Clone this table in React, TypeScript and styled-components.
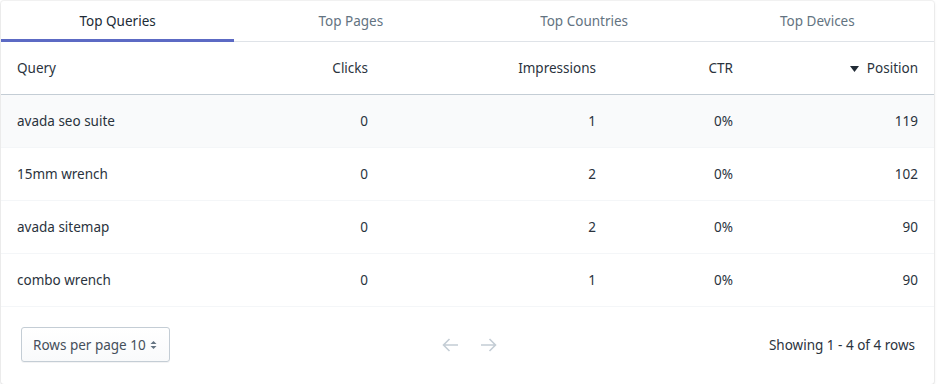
import React from "react";
import styled, { createGlobalStyle } from "styled-components";

const Global = createGlobalStyle`
  html, body { margin: 0; padding: 0; background: #ffffff; }
  body { font-family: "Noto Sans", "Open Sans", sans-serif; font-size: 13.5px; color: #212b36; }
  * { box-sizing: border-box; }
`;

const Page = styled.div`
  padding: 1px 0 0 1px;
  width: 938px;
`;

const Card = styled.div`
  width: 933px;
  background: #fff;
  border-radius: 3px;
  box-shadow: 0 0 0 1px rgba(63, 63, 68, 0.05), 0 1px 3px 0 rgba(63, 63, 68, 0.15);
  overflow: hidden;
`;

const Tabs = styled.div`
  display: grid;
  grid-template-columns: repeat(4, 1fr);
  border-bottom: 1px solid #dfe3e8;
  height: 41px;
`;

const Tab = styled.div<{ $active?: boolean }>`
  display: flex;
  align-items: center;
  justify-content: center;
  color: ${(p) => (p.$active ? "#212b36" : "#637381")};
  position: relative;
  padding-bottom: 1px;
  &::after {
    content: "";
    position: absolute;
    left: 0;
    right: 0;
    bottom: -1px;
    height: 3px;
    background: ${(p) => (p.$active ? "#5c6ac4" : "transparent")};
  }
`;

const Row = styled.div<{ $head?: boolean; $hover?: boolean }>`
  display: grid;
  grid-template-columns: 249px 134px 228px 137px 1fr;
  height: 53px;
  border-bottom: 1px solid ${(p) => (p.$head ? "#c4cdd5" : "#f4f6f8")};
  background: ${(p) => (p.$hover ? "#f9fafb" : "#fff")};
`;

const Cell = styled.div<{ $right?: boolean }>`
  display: flex;
  align-items: center;
  justify-content: ${(p) => (p.$right ? "flex-end" : "flex-start")};
  padding: 0 16px;
  white-space: nowrap;
  color: #2a333d;
`;

const SortIcon = styled.svg`
  width: 9px;
  height: 6px;
  margin-right: 8px;
  margin-top: 1px;
`;

const Footer = styled.div`
  display: grid;
  grid-template-columns: 1fr auto 1fr;
  align-items: center;
  padding: 20px 19px 22px 20px;
`;

const Select = styled.div`
  justify-self: start;
  display: flex;
  align-items: center;
  gap: 4px;
  height: 35px;
  width: 149px;
  padding: 0 10px 0 11px;
  white-space: nowrap;
  border: 1px solid #c4cdd5;
  border-radius: 3px;
  background: linear-gradient(180deg, #fff, #f9fafb);
  color: #454f5b;
  box-shadow: 0 1px 0 0 rgba(22, 29, 37, 0.05);
  svg { flex-shrink: 0; }
`;

const Pager = styled.div`
  display: flex;
  gap: 21px;
  align-items: center;
  margin-left: 3px;
`;

const Arrow = styled.svg`
  width: 17px;
  height: 14px;
`;

const Showing = styled.div`
  justify-self: end;
  color: #2a333d;
`;

const rows = [
  ["avada seo suite", "0", "1", "0%", "119"],
  ["15mm wrench", "0", "2", "0%", "102"],
  ["avada sitemap", "0", "2", "0%", "90"],
  ["combo wrench", "0", "1", "0%", "90"],
];

export default function App() {
  return (
    <Page>
      <Global />
      <Card>
        <Tabs>
          <Tab $active>Top Queries</Tab>
          <Tab>Top Pages</Tab>
          <Tab>Top Countries</Tab>
          <Tab>Top Devices</Tab>
        </Tabs>
        <Row $head>
          <Cell>Query</Cell>
          <Cell $right>Clicks</Cell>
          <Cell $right>Impressions</Cell>
          <Cell $right>CTR</Cell>
          <Cell $right>
            <SortIcon viewBox="0 0 9 6">
              <path d="M0 0h9L4.5 6z" fill="#212b36" />
            </SortIcon>
            Position
          </Cell>
        </Row>
        {rows.map((r, i) => (
          <Row key={i} $hover={i === 0}>
            <Cell>{r[0]}</Cell>
            <Cell $right>{r[1]}</Cell>
            <Cell $right>{r[2]}</Cell>
            <Cell $right>{r[3]}</Cell>
            <Cell $right>{r[4]}</Cell>
          </Row>
        ))}
        <Footer>
          <Select>
            Rows per page 10
            <svg width="7" height="10" viewBox="0 0 7 10">
              <path d="M0.5 4L3.5 1L6.5 4z" fill="#637381" />
              <path d="M0.5 6L3.5 9L6.5 6z" fill="#637381" />
            </svg>
          </Select>
          <Pager>
            <Arrow viewBox="0 0 17 14">
              <path d="M16 7H1.5M7.5 1L1.5 7l6 6" stroke="#c4cdd5" strokeWidth="1.6" fill="none" />
            </Arrow>
            <Arrow viewBox="0 0 17 14">
              <path d="M1 7h14.5M9.5 1l6 6-6 6" stroke="#c4cdd5" strokeWidth="1.6" fill="none" />
            </Arrow>
          </Pager>
          <Showing>Showing 1 - 4 of 4 rows</Showing>
        </Footer>
      </Card>
    </Page>
  );
}
